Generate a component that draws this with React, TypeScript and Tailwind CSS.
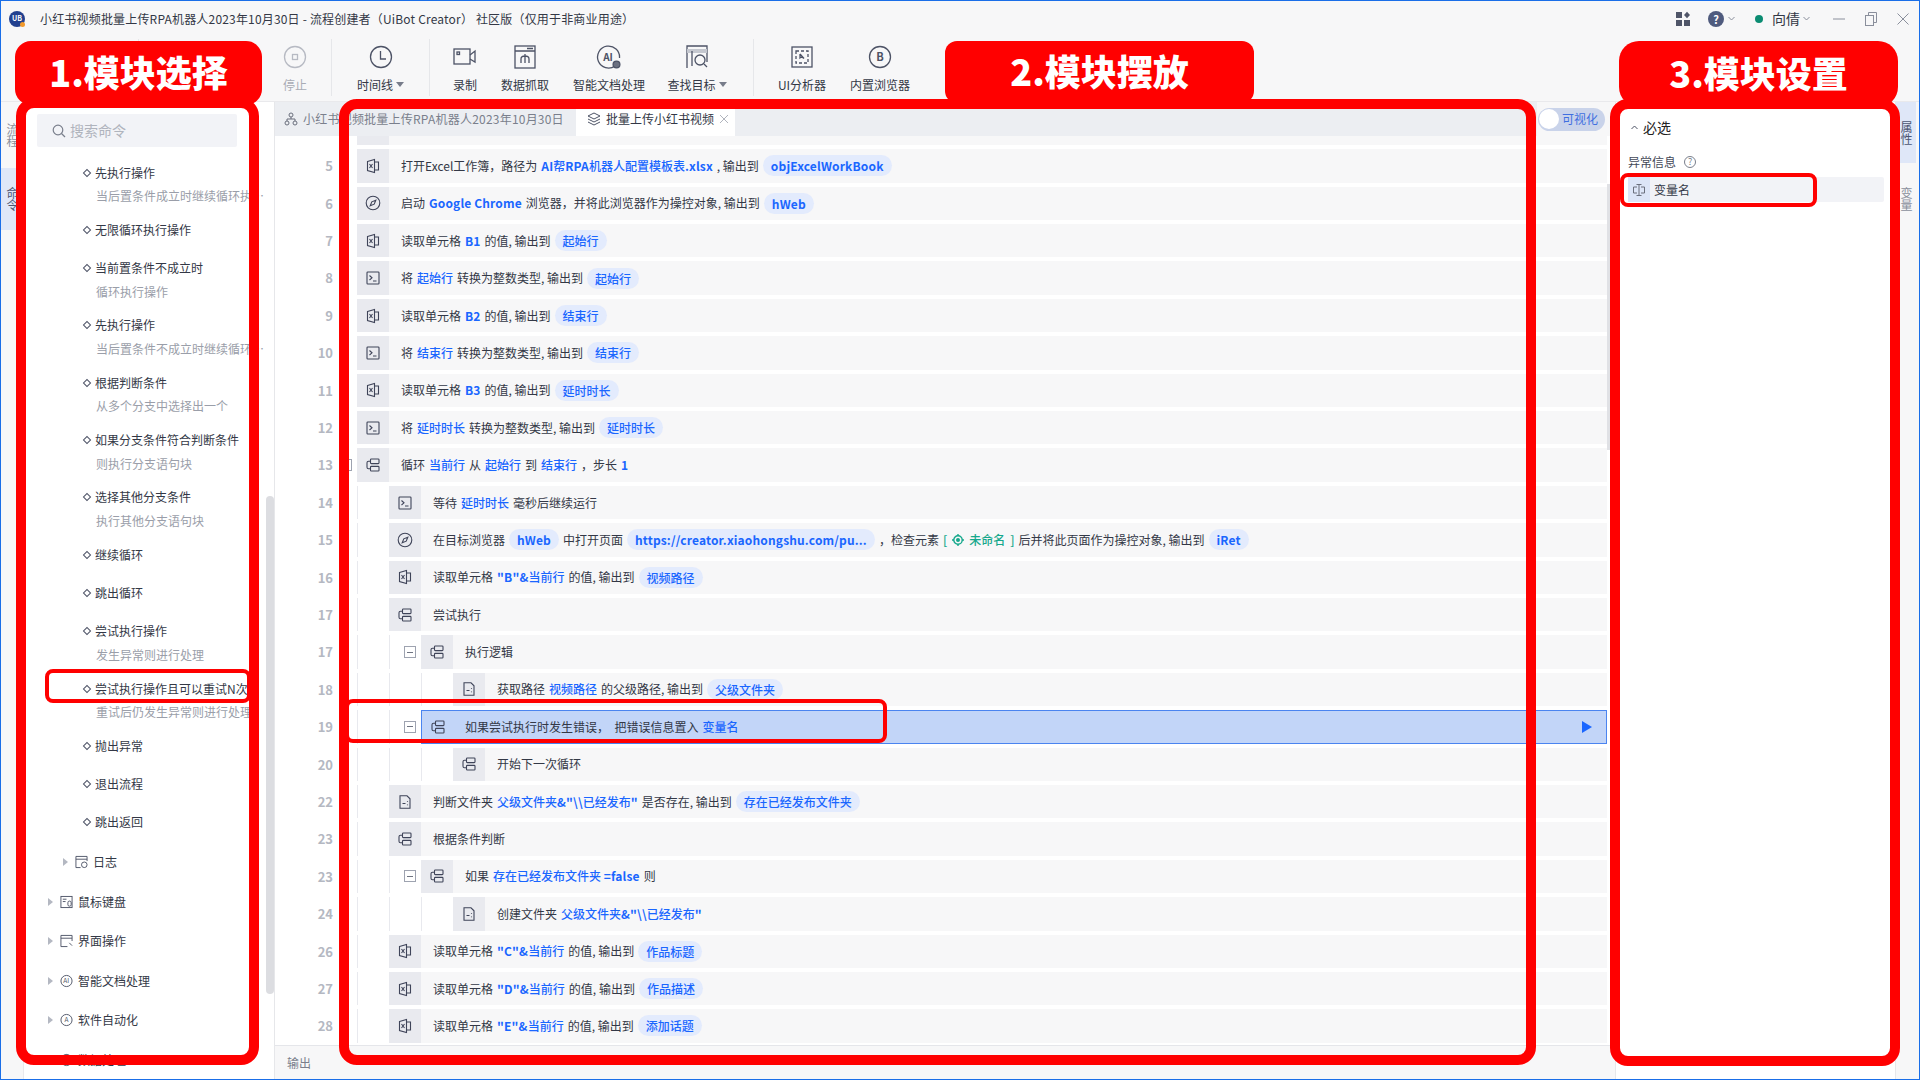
import type { ReactNode } from "react";

type Seg = string | { b: string } | { p: string } | { g: string };
type IconName = "excel" | "compass" | "term" | "branch" | "file";

interface Row {
  n: number;
  level: number;
  icon: IconName;
  segs: Seg[];
  fold?: boolean;
  active?: boolean;
}

const rows: Row[] = [
  { n: 5, level: 0, icon: "excel", segs: ["打开Excel工作簿，路径为", { b: "AI帮RPA机器人配置模板表.xlsx" }, ", 输出到", { p: "objExcelWorkBook" }] },
  { n: 6, level: 0, icon: "compass", segs: ["启动", { b: "Google Chrome" }, "浏览器，并将此浏览器作为操控对象, 输出到", { p: "hWeb" }] },
  { n: 7, level: 0, icon: "excel", segs: ["读取单元格", { b: "B1" }, "的值, 输出到", { p: "起始行" }] },
  { n: 8, level: 0, icon: "term", segs: ["将", { b: "起始行" }, "转换为整数类型, 输出到", { p: "起始行" }] },
  { n: 9, level: 0, icon: "excel", segs: ["读取单元格", { b: "B2" }, "的值, 输出到", { p: "结束行" }] },
  { n: 10, level: 0, icon: "term", segs: ["将", { b: "结束行" }, "转换为整数类型, 输出到", { p: "结束行" }] },
  { n: 11, level: 0, icon: "excel", segs: ["读取单元格", { b: "B3" }, "的值, 输出到", { p: "延时时长" }] },
  { n: 12, level: 0, icon: "term", segs: ["将", { b: "延时时长" }, "转换为整数类型, 输出到", { p: "延时时长" }] },
  { n: 13, level: 0, icon: "branch", fold: true, segs: ["循环", { b: "当前行" }, "从", { b: "起始行" }, "到", { b: "结束行" }, "，步长", { b: "1" }] },
  { n: 14, level: 1, icon: "term", segs: ["等待", { b: "延时时长" }, "毫秒后继续运行"] },
  { n: 15, level: 1, icon: "compass", segs: ["在目标浏览器", { p: "hWeb" }, "中打开页面", { p: "https://creator.xiaohongshu.com/pu..." }, "，检查元素", { g: "未命名" }, "后并将此页面作为操控对象, 输出到", { p: "iRet" }] },
  { n: 16, level: 1, icon: "excel", segs: ["读取单元格", { b: "\"B\"&当前行" }, "的值, 输出到", { p: "视频路径" }] },
  { n: 17, level: 1, icon: "branch", segs: ["尝试执行"] },
  { n: 17, level: 2, icon: "branch", fold: true, segs: ["执行逻辑"] },
  { n: 18, level: 3, icon: "file", segs: ["获取路径", { b: "视频路径" }, "的父级路径, 输出到", { p: "父级文件夹" }] },
  { n: 19, level: 2, icon: "branch", fold: true, active: true, segs: ["如果尝试执行时发生错误，\u00a0\u00a0把错误信息置入", { b: "变量名" }] },
  { n: 20, level: 3, icon: "branch", segs: ["开始下一次循环"] },
  { n: 22, level: 1, icon: "file", segs: ["判断文件夹", { b: "父级文件夹&\"\\\\已经发布\"" }, "是否存在, 输出到", { p: "存在已经发布文件夹" }] },
  { n: 23, level: 1, icon: "branch", segs: ["根据条件判断"] },
  { n: 23, level: 2, icon: "branch", fold: true, segs: ["如果", { b: "存在已经发布文件夹 =false" }, "则"] },
  { n: 24, level: 3, icon: "file", segs: ["创建文件夹", { b: "父级文件夹&\"\\\\已经发布\"" }] },
  { n: 26, level: 1, icon: "excel", segs: ["读取单元格", { b: "\"C\"&当前行" }, "的值, 输出到", { p: "作品标题" }] },
  { n: 27, level: 1, icon: "excel", segs: ["读取单元格", { b: "\"D\"&当前行" }, "的值, 输出到", { p: "作品描述" }] },
  { n: 28, level: 1, icon: "excel", segs: ["读取单元格", { b: "\"E\"&当前行" }, "的值, 输出到", { p: "添加话题" }] },
];

const commands = [
  { t: "先执行操作", s: "当后置条件成立时继续循环执行操作" },
  { t: "无限循环执行操作" },
  { t: "当前置条件不成立时", s: "循环执行操作" },
  { t: "先执行操作", s: "当后置条件不成立时继续循环执行操作" },
  { t: "根据判断条件", s: "从多个分支中选择出一个" },
  { t: "如果分支条件符合判断条件", s: "则执行分支语句块" },
  { t: "选择其他分支条件", s: "执行其他分支语句块" },
  { t: "继续循环" },
  { t: "跳出循环" },
  { t: "尝试执行操作", s: "发生异常则进行处理" },
  { t: "尝试执行操作且可以重试N次", s: "重试后仍发生异常则进行处理" },
  { t: "抛出异常" },
  { t: "退出流程" },
  { t: "跳出返回" },
];

function RowIcon({ name }: { name: IconName }) {
  const common = { width: 16, height: 16, viewBox: "0 0 16 16", fill: "none", stroke: "#3f4459", strokeWidth: 1.1 };
  if (name === "excel")
    return (
      <svg {...common}>
        <path d="M2.5 3.5 9.5 1.5V14.5L2.5 12.5Z" />
        <path d="M9.5 4H13.5V12H9.5" />
        <path d="M4.5 6 7.5 10M7.5 6 4.5 10" />
      </svg>
    );
  if (name === "compass")
    return (
      <svg {...common}>
        <circle cx="8" cy="8" r="6.8" />
        <path d="M10.8 5.2 9.2 9.2 5.2 10.8 6.8 6.8Z" />
      </svg>
    );
  if (name === "term")
    return (
      <svg {...common}>
        <rect x="2" y="2" width="12" height="12" rx="0.8" />
        <path d="M4.5 5.5 7 7.8 4.5 10M8 11H11.5" />
      </svg>
    );
  if (name === "file")
    return (
      <svg {...common}>
        <path d="M3 1.8H10L13 4.8V14.2H3Z" />
        <path d="M5.5 9.5H8.5M10.5 7V7.8M10.5 10.5V11.3" />
      </svg>
    );
  return (
    <svg {...common}>
      <rect x="5.5" y="2" width="8.5" height="4.6" rx="0.8" />
      <rect x="5.5" y="9.4" width="8.5" height="4.6" rx="0.8" />
      <path d="M5.5 4.3H3.5Q2 4.3 2 5.8V10.2Q2 11.7 3.5 11.7H5.5" />
    </svg>
  );
}

function Tool({ label, width, caret, muted, children }: { label: string; width: number; caret?: boolean; muted?: boolean; children: ReactNode }) {
  return (
    <div className="flex flex-col items-center shrink-0" style={{ width }}>
      <div className="h-[30px] flex items-center justify-center">{children}</div>
      <div className={`mt-[4px] h-[18px] leading-[18px] text-[12px] whitespace-nowrap flex items-center ${muted ? "text-[#a9acb5]" : "text-[#333846]"}`}>
        {label}
        {caret && <span className="ml-[3px] w-0 h-0 border-x-[4px] border-x-transparent border-t-[5px] border-t-[#777c8a]" />}
      </div>
    </div>
  );
}

function Sep() {
  return <div className="w-px h-[57px] bg-[#e6e7ea] shrink-0" />;
}

function Toolbar() {
  const s = { fill: "none", stroke: "#4d5366", strokeWidth: 1.3 };
  return (
    <div className="h-[66px] flex items-center shrink-0 border-b border-[#e9e9ec] pb-[2px]">
      <div className="w-[137px] shrink-0" />
      <Sep />
      <div className="w-[120px] shrink-0" />
      <Tool label="停止" width={72} muted>
        <svg width="24" height="24" viewBox="0 0 24 24" fill="none" stroke="#b7bac3" strokeWidth="1.3">
          <circle cx="12" cy="12" r="10.5" />
          <rect x="9.5" y="9.5" width="5" height="5" />
        </svg>
      </Tool>
      <Sep />
      <Tool label="时间线" width={97} caret>
        <svg width="24" height="24" viewBox="0 0 24 24" {...s}>
          <circle cx="12" cy="12" r="10.5" />
          <path d="M11.5 6V14H17" />
        </svg>
      </Tool>
      <Sep />
      <div className="w-[5px] shrink-0" />
      <Tool label="录制" width={60}>
        <svg width="24" height="20" viewBox="0 0 24 20" {...s}>
          <rect x="1" y="2" width="16" height="15" />
          <rect x="4" y="5" width="2.5" height="2.5" />
          <path d="M17 8 22 4V15L17 12" />
        </svg>
      </Tool>
      <Tool label="数据抓取" width={60}>
        <svg width="22" height="24" viewBox="0 0 22 24" {...s}>
          <rect x="1" y="1" width="20" height="22" />
          <path d="M1 6H21M13 3.5H19" />
          <path d="M7 18V14Q7 11 11 11T15 14V18M11 9V18" />
        </svg>
      </Tool>
      <Tool label="智能文档处理" width={108}>
        <svg width="26" height="26" viewBox="0 0 26 26" {...s}>
          <path d="M19 22A11 11 0 1 1 23.5 14" />
          <text x="12" y="16.5" textAnchor="middle" fontSize="10" fontWeight="700" fill="#4d5366" stroke="none">AI</text>
          <circle cx="20.5" cy="20.5" r="3.4" fill="#6b7080" />
        </svg>
      </Tool>
      <Tool label="查找目标" width={68} caret>
        <svg width="22" height="24" viewBox="0 0 22 24" {...s}>
          <path d="M1 23V1H21V17" />
          <path d="M1 6H21" strokeWidth="4" stroke="#c4c7cf" />
          <path d="M6 6V21" />
          <circle cx="14" cy="15" r="5" />
          <path d="M18 19 21 22" />
        </svg>
      </Tool>
      <div className="w-[22px] shrink-0" />
      <Sep />
      <Tool label="UI分析器" width={96}>
        <svg width="22" height="22" viewBox="0 0 22 22" {...s}>
          <rect x="1" y="1" width="20" height="20" />
          <rect x="5" y="5" width="12" height="12" strokeDasharray="3 2" />
          <path d="M9 8V12L10.5 10.8 13 12.5 9 8" />
        </svg>
      </Tool>
      <Tool label="内置浏览器" width={60}>
        <svg width="24" height="24" viewBox="0 0 24 24" {...s}>
          <circle cx="12" cy="12" r="10.5" />
          <text x="12" y="16" textAnchor="middle" fontSize="11" fontWeight="700" fill="#4d5366" stroke="none">B</text>
        </svg>
      </Tool>
    </div>
  );
}

function TitleBar() {
  return (
    <div className="h-[35px] flex items-center shrink-0">
      <div className="relative ml-[8px] w-[16px] h-[16px] rounded-full bg-[#22408f] flex items-center justify-center text-[7px] font-bold text-white">
        UB
        <span className="absolute right-0 bottom-0 w-[5px] h-[5px] rounded-full bg-[#f29a2e]" />
      </div>
      <div className="ml-[15px] text-[12px] tracking-[0.18px] text-[#333846] whitespace-nowrap">
        小红书视频批量上传RPA机器人2023年10月30日 - 流程创建者（UiBot Creator） 社区版（仅用于非商业用途）
      </div>
      <div className="ml-auto flex items-center text-[#5a6072]">
        <svg width="16" height="16" viewBox="0 0 16 16" fill="#4f5568">
          <rect x="1" y="1" width="6" height="6" />
          <rect x="1" y="9" width="6" height="6" />
          <rect x="9" y="9" width="6" height="6" />
          <path d="M12 .8 15 4 12 7.2 9 4Z" />
        </svg>
        <div className="ml-[17px] w-[16px] h-[16px] rounded-full bg-[#4f5b7e] text-white text-[11px] font-bold leading-[16px] text-center">?</div>
        <svg className="ml-[3px]" width="9" height="9" viewBox="0 0 9 9" fill="none" stroke="#8a8f9c"><path d="M1.5 3 4.5 6 7.5 3" /></svg>
        <span className="ml-[19px] w-[8px] h-[8px] rounded-full bg-[#0b8c72]" />
        <span className="ml-[9px] text-[14px] text-[#333846]">向倩</span>
        <svg className="ml-[2px]" width="9" height="9" viewBox="0 0 9 9" fill="none" stroke="#8a8f9c"><path d="M1.5 3 4.5 6 7.5 3" /></svg>
        <svg className="ml-[22px]" width="12" height="12" viewBox="0 0 12 12" fill="none" stroke="#8a8f9c"><path d="M0 6H12" /></svg>
        <svg className="ml-[20px]" width="12" height="14" viewBox="0 0 12 14" fill="none" stroke="#8a8f9c"><rect x="0.5" y="3.5" width="8" height="10" /><path d="M3.5 3.5V.5H11.5V10.5H8.5" /></svg>
        <svg className="ml-[20px] mr-[10px]" width="12" height="12" viewBox="0 0 12 12" fill="none" stroke="#8a8f9c"><path d="M.5.5 11.5 11.5M11.5.5 .5 11.5" /></svg>
      </div>
    </div>
  );
}

function Rail({ items, side }: { items: { t: string; h: number; on?: boolean }[]; side: "l" | "r" }) {
  return (
    <div className={`w-[23px] shrink-0 flex flex-col ${side === "l" ? "border-r border-[#e9e9ec]" : "pr-[3px]"}`}>
      {items.map((it) => (
        <div key={it.t} className={`flex items-center justify-center shrink-0 ${it.on ? "bg-[#dfe7f8]" : ""}`} style={{ height: it.h }}>
          <span className={`[writing-mode:vertical-rl] text-[12px] ${it.on ? "text-[#4b5572]" : "text-[#8a8f9c]"}`}>{it.t}</span>
        </div>
      ))}
    </div>
  );
}

function TreeGroup({ label, pad, children }: { label: string; pad: number; children: ReactNode }) {
  return (
    <div className="h-[39.5px] flex items-center shrink-0" style={{ paddingLeft: pad }}>
      <span className="w-0 h-0 border-y-[4px] border-y-transparent border-l-[5px] border-l-[#b4b8c2]" />
      <span className="ml-[7px] w-[13px] h-[14px] flex items-center justify-center">{children}</span>
      <span className="ml-[5px] text-[12px] text-[#333846]">{label}</span>
    </div>
  );
}

function Sidebar() {
  const g = { width: 14, height: 14, viewBox: "0 0 14 14", fill: "none", stroke: "#4d5366", strokeWidth: 1 };
  return (
    <div className="relative w-[251px] shrink-0 bg-white border-r border-[#e6e7ea] overflow-hidden">
      <div className="mt-[12px] ml-[13px] w-[200px] h-[33px] rounded-[2px] bg-[#f2f3f7] flex items-center pl-[15px]">
        <svg width="14" height="14" viewBox="0 0 14 14" fill="none" stroke="#7a7f8c" strokeWidth="1.2"><circle cx="6" cy="6" r="4.8" /><path d="M9.5 9.5 13 13" /></svg>
        <span className="ml-[4px] text-[14px] text-[#b0b4bd]">搜索命令</span>
      </div>
      <div className="mt-[6.5px]">
        {commands.map((c, i) => (
          <div key={i} className={`pt-[7.6px] pl-[60px] ${c.s ? "h-[57.3px]" : "h-[38.3px]"}`}>
            <div className="flex items-center h-[23px] text-[12px] text-[#333846] whitespace-nowrap">
              <span className="w-[6px] h-[6px] rotate-45 border border-[#4d5366] mr-[5px] shrink-0" />
              {c.t}
            </div>
            {c.s && <div className="ml-[12px] w-[170px] truncate leading-[23px] text-[12px] text-[#9a9ea9]">{c.s}</div>}
          </div>
        ))}
        <div className="h-[1px]" />
        <TreeGroup label="日志" pad={39}>
          <svg {...g}><path d="M13 6V1H1V13H6M1 4H13" /><circle cx="10" cy="10" r="3" /></svg>
        </TreeGroup>
        <TreeGroup label="鼠标键盘" pad={24}>
          <svg {...g}><rect x="1" y="1" width="12" height="12" /><path d="M3 4H7M3 6.5H6" /><rect x="8.5" y="6" width="3.5" height="5.5" rx="1.7" /></svg>
        </TreeGroup>
        <TreeGroup label="界面操作" pad={24}>
          <svg {...g}><path d="M13 7V1H1V13H8M1 4H13" /><path d="M10 9 13 12" /></svg>
        </TreeGroup>
        <TreeGroup label="智能文档处理" pad={24}>
          <svg {...g}><circle cx="7" cy="7" r="6" /><text x="6.6" y="9.6" textAnchor="middle" fontSize="7" fill="#4d5366" stroke="none">AI</text></svg>
        </TreeGroup>
        <TreeGroup label="软件自动化" pad={24}>
          <svg {...g}><circle cx="7" cy="7" r="6" /><text x="7" y="9.6" textAnchor="middle" fontSize="7" fill="#4d5366" stroke="none">A</text></svg>
        </TreeGroup>
        <TreeGroup label="数据处理" pad={24}>
          <svg {...g}><circle cx="7" cy="7" r="6" /><path d="M7 1V7H13" /></svg>
        </TreeGroup>
      </div>
      <div className="absolute right-0 top-[394px] w-[8px] h-[498px] rounded-full bg-[#dcdde1]" />
    </div>
  );
}

function Fold() {
  return (
    <span className="w-[12px] h-[12px] border border-[#9ea3b0] flex items-center justify-center shrink-0">
      <span className="w-[6px] h-px bg-[#6f7482]" />
    </span>
  );
}

// latin runs are heavier and wider than the cjk ones in the blue text
function BlueText({ text }: { text: string }) {
  return (
    <>
      {text.split(/([\x21-\x7e]+)/).map((part, i) =>
        /[\x21-\x7e]/.test(part) ? (
          <span key={i} className="font-bold tracking-[0.15px]">{part}</span>
        ) : (
          <span key={i} className="font-medium">{part}</span>
        ),
      )}
    </>
  );
}

function Segment({ seg }: { seg: Seg }) {
  if (typeof seg === "string") return <span className="text-[#333846]">{seg}</span>;
  if ("b" in seg)
    return (
      <span className="text-[#1a66ff]">
        <BlueText text={seg.b} />
      </span>
    );
  if ("p" in seg)
    return (
      <span className="h-[21px] leading-[21px] px-[8px] rounded-full bg-[#e3ebfd] text-[#1a66ff]">
        <BlueText text={seg.p} />
      </span>
    );
  return (
    <span className="flex items-center text-[#16a88c] font-medium">
      [
      <svg className="mx-[5px]" width="12" height="12" viewBox="0 0 12 12" fill="none" stroke="#16a88c" strokeWidth="1.4">
        <circle cx="6" cy="6" r="4.2" />
        <circle cx="6" cy="6" r="1.3" fill="#16a88c" />
        <path d="M6 0V2M6 10V12M0 6H2M10 6H12" />
      </svg>
      {seg.g}
      <span className="ml-[5px]">]</span>
    </span>
  );
}

function EditorRow({ row }: { row: Row }) {
  // level 0 has no spacer cells, its fold box sits in the gutter
  const spacers = Array.from({ length: row.level }, (_, i) => i);
  const box = row.active ? "bg-[#c2d5f8] border-y border-[#4a84f0]" : "";
  return (
    <div className="flex h-[33.4px] mb-[4px]">
      <div className="w-[58px] shrink-0 text-right text-[13px] font-semibold leading-[33.4px] text-[#b4b8c2]">{row.n}</div>
      <div className="w-[24px] shrink-0 flex items-center justify-end pr-[5px]">{row.fold && row.level === 0 && <Fold />}</div>
      {spacers.map((i) => (
        <div key={i} className="w-[32px] shrink-0 border-l border-[#e8e9ee] flex items-center justify-end pr-[5px]">
          {row.fold && i === row.level - 1 && <Fold />}
        </div>
      ))}
      <div className={`w-[32px] shrink-0 flex items-center justify-center ${row.active ? `${box} border-l` : "bg-[#e9eaef]"}`}>
        <RowIcon name={row.icon} />
      </div>
      <div className={`flex-1 min-w-0 flex items-center gap-[4px] pl-[12px] text-[12px] whitespace-nowrap ${row.active ? `${box} border-r` : "bg-[#f7f7f8]"}`}>
        {row.segs.map((s, i) => (
          <Segment key={i} seg={s} />
        ))}
        {row.active && <span className="ml-auto mr-[14px] w-0 h-0 border-y-[6.5px] border-y-transparent border-l-[10px] border-l-[#1a66ff]" />}
      </div>
    </div>
  );
}

function Editor() {
  return (
    <div className="flex-1 min-w-0 flex flex-col bg-white">
      <div className="h-[34px] flex shrink-0 bg-[#eceef2]">
        <div className="w-[301px] shrink-0 flex items-center pl-[9px] text-[12px] text-[#7a7f8c] whitespace-nowrap">
          <svg width="14" height="14" viewBox="0 0 14 14" fill="none" stroke="#6a6f7d"><circle cx="7" cy="3" r="2" /><circle cx="3" cy="11" r="2" /><circle cx="11" cy="11" r="2" /><path d="M7 5V7M3 9V7H11V9" /></svg>
          <span className="ml-[5px] tracking-[0.22px]">小红书视频批量上传RPA机器人2023年10月30日</span>
        </div>
        <div className="w-[159px] shrink-0 bg-white flex items-center pl-[11px] text-[12px] text-[#333846]">
          <svg width="14" height="14" viewBox="0 0 14 14" fill="none" stroke="#4d5366"><path d="M7 1 13 4 7 7 1 4Z" /><path d="M1 7 7 10 13 7M1 10 7 13 13 10" /></svg>
          <span className="ml-[5px]">批量上传小红书视频</span>
          <svg className="ml-[5px]" width="10" height="10" viewBox="0 0 10 10" fill="none" stroke="#b0b4bd"><path d="M1 1 9 9M9 1 1 9" /></svg>
        </div>
        <div className="flex-1" />
        <div className="w-[78px] shrink-0 bg-[#f7f7f8] flex items-center pl-[1px]">
          <div className="w-[67px] h-[23px] rounded-full bg-[#c9d3ea] flex items-center pl-[1px]">
            <span className="w-[20px] h-[20px] rounded-full bg-white" />
            <span className="ml-[3px] text-[12px] text-[#3f6fe0]">可视化</span>
          </div>
        </div>
      </div>
      <div className="flex-1 min-h-0 overflow-hidden flex">
        <div className="flex-1 min-w-0">
          <div className="flex h-[9.3px] mb-[4px]">
            <div className="w-[82px] shrink-0" />
            <div className="w-[32px] shrink-0 bg-[#e9eaef]" />
            <div className="flex-1 bg-[#f7f7f8]" />
          </div>
          {rows.map((r, i) => (
            <EditorRow key={i} row={r} />
          ))}
        </div>
        <div className="w-[8px] shrink-0">
          <div className="mt-[48px] w-[4px] h-[266px] bg-[#e0e1e5]" />
        </div>
      </div>
      <div className="h-[34px] shrink-0 border-t border-[#e5e6ea] bg-[#f7f7f8] pl-[12px] flex items-center text-[12px] text-[#7a7f8c]">输出</div>
    </div>
  );
}

function Settings() {
  return (
    <div className="w-[281px] shrink-0 bg-white border-x border-[#e6e7ea] pt-[15px] pl-[12px] pr-[11px]">
      <div className="flex items-center h-[20px]">
        <svg className="ml-[2px]" width="9" height="9" viewBox="0 0 9 9" fill="none" stroke="#4d5366"><path d="M1.5 6 4.5 3 7.5 6" /></svg>
        <span className="ml-[4px] text-[14px] text-[#222]">必选</span>
      </div>
      <div className="mt-[16px] flex items-center h-[18px] text-[12px] text-[#444958]">
        异常信息
        <span className="ml-[8px] w-[12px] h-[12px] rounded-full border border-[#7a7f8c] text-[9px] leading-[10px] text-center text-[#7a7f8c]">?</span>
      </div>
      <div className="mt-[6px] h-[25px] bg-[#f2f3f7] rounded-[2px] flex items-center">
        <div className="w-[22px] h-full bg-[#dce5f8] flex items-center justify-center">
          <svg width="14" height="14" viewBox="0 0 14 14" fill="none" stroke="#6a6f7d"><path d="M4.5 1.5H9.5M7 1.5V12.5M4.5 12.5H9.5" /><path d="M5 4H1.5V10H5M9 4H12.5V10H9" /></svg>
        </div>
        <span className="ml-[4px] text-[12px] text-[#333846]">变量名</span>
      </div>
    </div>
  );
}

function RedLabel({ className, children }: { className: string; children: string }) {
  return (
    <div className={`absolute bg-[#ff0000] text-white text-[36px] font-black flex items-center justify-center whitespace-nowrap leading-none pb-[5px] ${className}`}>
      {children}
    </div>
  );
}

export default function App() {
  return (
    <div className="relative w-[1920px] h-[1080px] overflow-hidden flex flex-col bg-[#f7f7f8] border border-[#1a6ee8] font-['Noto_Sans_CJK_SC','Noto_Sans',sans-serif]">
      <TitleBar />
      <Toolbar />
      <div className="flex-1 min-h-0 flex">
        <Rail
          side="l"
          items={[
            { t: "流程", h: 66 },
            { t: "命令", h: 62, on: true },
          ]}
        />
        <Sidebar />
        <Editor />
        <Settings />
        <Rail
          side="r"
          items={[
            { t: "属性", h: 61, on: true },
            { t: "变量", h: 72 },
          ]}
        />
      </div>

      {/* red annotations drawn on top of the app */}
      <div className="absolute left-[15px] top-[97px] w-[243px] h-[967px] border-[10px] border-[#ff0000] rounded-[18px]" />
      <div className="absolute left-[338px] top-[98px] w-[1197px] h-[966px] border-[10px] border-[#ff0000] rounded-[18px]" />
      <div className="absolute left-[1609px] top-[98px] w-[290px] h-[967px] border-[10px] border-[#ff0000] rounded-[18px]" />
      <RedLabel className="left-[14px] top-[40px] w-[247px] h-[64px] rounded-[16px]">1.模块选择</RedLabel>
      <RedLabel className="left-[944px] top-[40px] w-[309px] h-[62px] rounded-[12px]">2.模块摆放</RedLabel>
      <RedLabel className="left-[1618px] top-[40px] w-[279px] h-[66px] rounded-[20px]">3.模块设置</RedLabel>
      <div className="absolute left-[44px] top-[668px] w-[206px] h-[34px] border-[4px] border-[#ff0000] rounded-[8px]" />
      <div className="absolute left-[344px] top-[698px] w-[542px] h-[44px] border-[4px] border-[#ff0000] rounded-[8px]" />
      <div className="absolute left-[1619px] top-[172px] w-[197px] h-[34px] border-[4px] border-[#ff0000] rounded-[8px]" />
    </div>
  );
}
